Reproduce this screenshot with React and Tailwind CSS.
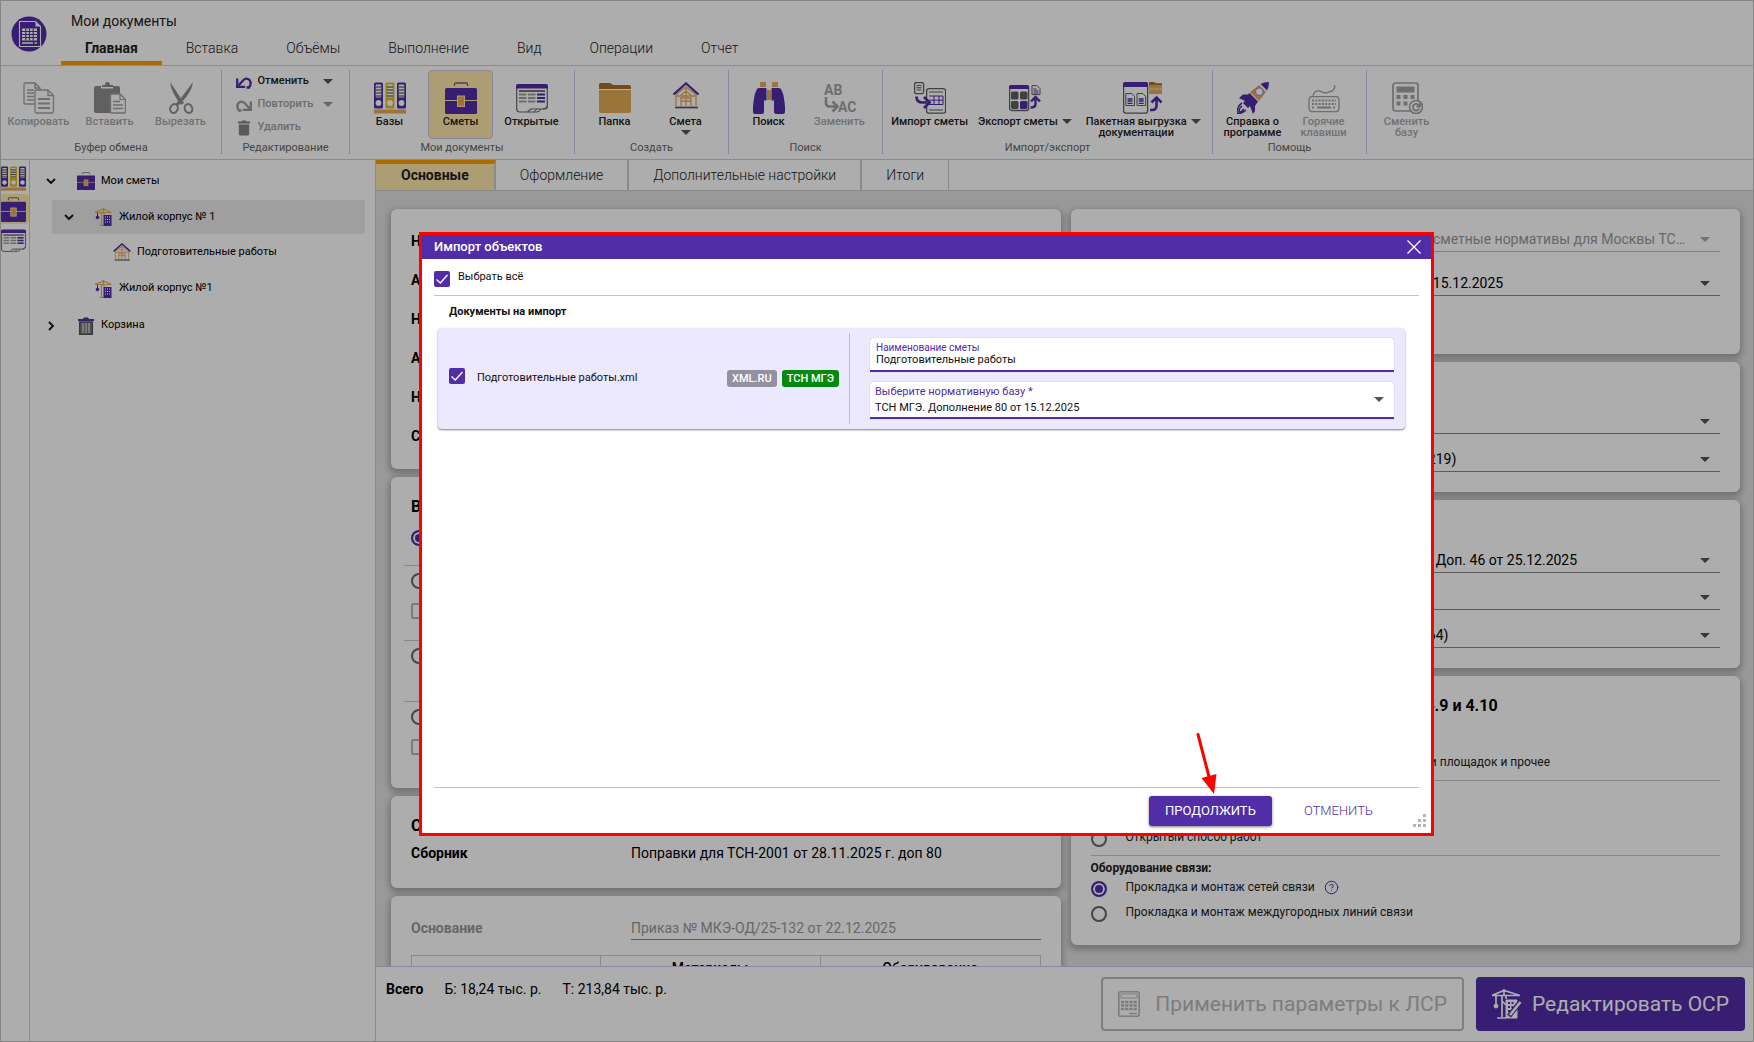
import React from "react";
import { CircleHelp } from "lucide-react";

const P = "#512da8";
const O = "#e5ac58";
const G = "#5f5f5f";
const D = "#a3a3a3";

function Svg({ size = "size-8", box = "0 0 32 32", children }) {
  return (
    <svg viewBox={box} className={`${size} shrink-0`} fill="none" aria-hidden="true">
      {children}
    </svg>
  );
}

function Caret({ className = "text-[#555]" }) {
  return (
    <svg viewBox="0 0 10 5" className={`h-[5px] w-[10px] shrink-0 ${className}`} aria-hidden="true">
      <path d="M0 0h10L5 5z" fill="currentColor" />
    </svg>
  );
}

function Binders({ size }) {
  return (
    <Svg size={size}>
      {[[0, P], [11.5, "#dcbb25"], [23, P]].map(([x, c]) => (
        <g key={x}>
          <rect x={x} y="0.5" width="9" height="26" rx="1.5" fill={c} />
          <rect x={x + 1.7} y="2.5" width="5.6" height="13" rx="1" fill="#fff" />
          <path d={`M${x + 1.5} 5h6M${x + 1.5} 8h6M${x + 1.5} 11h6M${x + 1.5} 14h6`} stroke="#333" strokeWidth="1.2" />
          <circle cx={x + 4.5} cy="21" r="2.9" fill="#fff" />
        </g>
      ))}
      <rect y="27.5" width="32" height="4" fill={O} />
    </Svg>
  );
}

function Briefcase({ size }) {
  return (
    <Svg size={size}>
      <path d="M9.5 4V2.5q0-1.5 1.500-1.500h10q1.500 0 1.500 1.500V4" stroke="#666" strokeWidth="1.300" />
      <rect y="6" width="32" height="26" rx="1.500" fill={P} />
      <path d="M0 18.500h32" stroke="#ffe8aa" strokeWidth="1" />
      <rect x="12.500" y="14" width="7" height="10.500" fill={O} stroke="#ffe8aa" />
    </Svg>
  );
}

function WindowIcon({ size }) {
  return (
    <Svg size={size}>
      <path d="M.7 6v21q0 3 3 3h8l3-3h14q2.600 0 2.600-3V6" stroke="#666" strokeWidth="1.200" />
      <path d="M12 30h9q3 0 3.500-3M18 30l3-3M27 27q3 0 4-3" stroke="#666" />
      <path d="M0 6.500V4q0-2 2-2h28q2 0 2 2v2.500z" fill={P} />
      <path d="M3 9h26" stroke="#444" strokeWidth="1.500" />
      {[12.500, 16, 19.500].map((y) => (
        <g key={y} strokeWidth="2">
          <path d={`M3 ${y}h7.500M12 ${y}h7.500`} stroke="#a0a0a0" />
          <path d={`M21 ${y}h8`} stroke={P} />
        </g>
      ))}
    </Svg>
  );
}

const FolderIcon = () => (
  <Svg>
    <path d="M0 7V2.500Q0 1 1.500 1H10q1.500 0 2.500 1t2.500 1h15q2 0 2 1.500V7z" fill="#a5702a" />
    <path d="M0 8h32v21q0 2-2 2H2q-2 0-2-2z" fill={O} />
  </Svg>
);

function House({ size, box }) {
  return (
    <Svg size={size} box={box}>
      <path d="M6 24V12.500L16 5l10 7.500V24M11 24v-8h10v8M16 6v18M6 14h20M11 19h10M11 13l5-4 5 4" stroke={O} strokeWidth="1.300" />
      <path d="M3.500 12.500L16 1.500l12.500 11" stroke={P} strokeWidth="2.300" />
      <path d="M5 25.500h23" stroke="#555" strokeWidth="1.700" />
    </Svg>
  );
}

const Binoculars = () => (
  <Svg>
    <path d="M7 0h6v5H7zM19 0h6v5h-6z" fill={O} />
    <path d="M14 8h4v10h-4z" fill={O} />
    <path d="M6 6h7.500v12.500H11V30q0 2-2 2H2q-2 0-2-2v-5Q1 13 3 9q1-3 3-3zM26 6h-7.500v12.500H21V30q0 2 2 2h7q2 0 2-2v-5Q31 13 29 9q-1-3-3-3z" fill={P} />
  </Svg>
);

const ReplaceIcon = () => (
  <Svg>
    <text x="0" y="13" fontFamily="Roboto" fontWeight="700" fontSize="14" fill={D}>AB</text>
    <text x="14" y="30" fontFamily="Roboto" fontWeight="700" fontSize="14" fill={D}>AC</text>
    <path d="M2 15v6q0 3.500 3.500 3.500H12M8.500 19.500l5 5-5 5" stroke={D} strokeWidth="2.600" />
  </Svg>
);

const ImportIcon = () => (
  <Svg>
    <rect x=".6" y=".6" width="9" height="11" rx="1.500" stroke={G} strokeWidth="1.300" />
    <path d="M2.500 3.500h5M2.500 8h5" stroke={G} /><path d="M2.500 5.800h5" stroke={P} />
    <rect x="12.600" y="6.600" width="19" height="24.600" rx="2.500" stroke={G} strokeWidth="1.300" />
    <path d="M15 10h14M15 28h14" stroke={G} strokeWidth="1.200" />
    <path d="M15 14h14v8.500H15M15 18.200h14M20 14v8.500M25 14v8.500" stroke={P} />
    <path d="M2.500 14.500q0 6 6 6H12M10 15l5.500 5.500-5.500 5.500" stroke={P} strokeWidth="2.700" />
  </Svg>
);

const ExportIcon = () => (
  <Svg>
    <rect x=".6" y="4" width="19" height="24.500" rx="2" stroke={G} strokeWidth="1.300" />
    <path d="M0 7V5q0-2 2-2h16q2 0 2 2v2z" fill={P} />
    <rect x="2" y="9.500" width="7.500" height="8" rx="1.500" fill={G} /><rect x="11" y="9.500" width="7.500" height="8" rx="1.500" fill={G} />
    <rect x="2" y="19" width="7.500" height="8" rx="1.500" fill={G} /><rect x="11" y="19" width="7.500" height="8" rx="1.500" fill={P} />
    <path d="M23 3.600h5l3 3v6h-8z" stroke={G} />
    <path d="M24.500 7h3M24.500 9h5M24.500 11h5" stroke={P} />
    <path d="M21.500 25.500h1q4 0 4-4V17M22 19.500l4.500-4.500 4.500 4.500" stroke={P} strokeWidth="2.400" />
  </Svg>
);

const PackIcon = () => (
  <Svg size="h-8 w-10" box="0 0 40 32">
    <rect x=".6" y=".6" width="24" height="30.600" rx="2.500" stroke={G} strokeWidth="1.300" />
    <path d="M0 5V2q0-2 2-2h21q2 0 2 2v3z" fill={P} />
    <path d="M2.800 11.500h6l2.700 3v9H2.800zM14 11.500h6l2.700 3v9H14z" stroke={G} />
    <path d="M4.500 17h5M4.500 19h5M4.500 21.300h5M15.700 17h5M15.700 19h5M15.700 21.300h5" stroke={P} strokeWidth="1.300" />
    <path d="M26 0h5l1.500 1H39v11H26z" fill={O} /><path d="M26 0h5l1.500 1.500H39V3H26z" fill="#a5702a" />
    <path d="M27 7h12" stroke="#fff" strokeDasharray="1.500 1" />
    <path d="M27 28h2q4.500 0 4.500-4.500V17M28.500 20.500l5-5 5 5" stroke={P} strokeWidth="2.600" />
  </Svg>
);

const Rocket = () => (
  <Svg>
    <path d="M32 0q0 5-2 8.500L23.500 2Q27 0 32 0z" fill={P} />
    <path d="M22 3l7 7-7 9-9-9z" fill={O} /><circle cx="22.300" cy="9.700" r="3.800" fill="#fff" stroke={P} strokeWidth=".5" />
    <path d="M12.500 11L21 19.500 18 24v5l-2 3-3-8-2 2-5-5 2-2-6-3 4-3.500h5z" fill={P} />
    <path d="M5 21q-5 3-5 11 6-1 9-4M5 24q-3 2-3 6 3 0 5-3" stroke={P} strokeWidth="1.500" />
  </Svg>
);

const KeyboardIcon = () => (
  <Svg>
    <path d="M5 14q1-6 7-5 5 3 9 1 6-1 6-7" stroke={D} strokeWidth="1.300" />
    <rect x="1" y="14.600" width="30" height="15" rx="3" stroke={D} strokeWidth="1.300" />
    <path d="M4 18.500h24M4 22h24M4 25.500h3M25 25.500h3" stroke={D} strokeWidth="2" strokeDasharray="2 1.300" />
    <path d="M9 25.500h14" stroke={D} strokeWidth="2" />
  </Svg>
);

const CalcIcon = () => (
  <Svg>
    <rect x="2" y="1" width="25" height="28" rx="2.500" stroke={D} strokeWidth="1.700" />
    <rect x="5.500" y="4.500" width="18" height="6" fill={D} />
    <path d="M5.500 15h18M5.500 21.500h11" stroke={D} strokeWidth="4" strokeDasharray="4 3" />
    <circle cx="25" cy="25" r="6.500" fill="#fff" stroke={D} strokeWidth="1.600" />
    <path d="M28 23.500a3.300 3.300 0 1 0 .2 3M29 21v3.500h-3.500" stroke={D} strokeWidth="1.800" />
  </Svg>
);

const CopyIcon = () => (
  <Svg>
    <path d="M1 2.500Q1 1 2.500 1H12l5 5v16H2.500Q1 22 1 20.500z" stroke={D} strokeWidth="1.300" />
    <path d="M4 8h7M4 11h7M4 14.500h7M4 18h7M12 1v5h5" stroke={D} strokeWidth="1.500" />
    <path d="M12 9.500Q12 8 13.500 8H25l5.500 5.500v16q0 1.500-1.500 1.500H13.500Q12 31 12 29.500z" fill="#fff" stroke={D} strokeWidth="1.300" />
    <path d="M25 8v5.500h5.500" stroke={D} strokeWidth="1.300" /><path d="M15 17h12M15 21.500h12M15 26h12" stroke={D} strokeWidth="1.900" />
  </Svg>
);

const PasteIcon = () => (
  <Svg>
    <path d="M2 4h5v2.500h12V4h5q2 0 2 2v25H2q-2 0-2-2V6q0-2 2-2z" fill="#8e8e8e" />
    <path d="M8 5V3h3q0-3 2.500-3T16 3h3v2z" fill="#8e8e8e" />
    <path d="M16.500 13.500q0-1.500 1.500-1.500h8l5.500 5.500v12q0 1.500-1.500 1.500H18q-1.500 0-1.500-1.500z" fill="#fff" stroke={D} strokeWidth="1.400" />
    <path d="M26 12v5.500h5.500" stroke={D} strokeWidth="1.200" /><path d="M19 19.500h7M19 23h10M19 26.500h10" stroke={D} strokeWidth="1.700" />
  </Svg>
);

const CutIcon = () => (
  <Svg>
    <path d="M5 0l14 21-3 2Q6 10 5 0zM28 0Q27 9 18 19l-2-3z" fill="#8e8e8e" />
    <path d="M16 17l-4 6" stroke="#8e8e8e" strokeWidth="3" />
    <ellipse cx="9" cy="26.500" rx="3.700" ry="4.500" transform="rotate(25 9 26.500)" stroke="#8e8e8e" strokeWidth="2" />
    <ellipse cx="23.500" cy="26.500" rx="3.700" ry="4.500" transform="rotate(-25 23.500 26.500)" stroke="#8e8e8e" strokeWidth="2" />
  </Svg>
);

const UndoIcon = ({ flip, color }) => (
  <Svg size="size-4" box="0 0 16 16">
    <g transform={flip ? "matrix(-1 0 0 1 16 0)" : undefined} stroke={color} strokeWidth="2.300">
      <path d="M2.500 11.500L7 6.500q3.500-3.500 6.500-.5 2.500 3.500-.5 7.500h-2.500" />
      <path d="M1.200 4.500v8.300h8" />
    </g>
  </Svg>
);

const BinIcon = () => (
  <Svg size="size-4" box="0 0 16 16">
    <path d="M2 1.500h3.500L6.500.5h3l1 1H14v2H2zM2.800 4.500h10.400v9.500q0 1.500-1.500 1.500H4.300q-1.500 0-1.500-1.500z" fill="#858585" />
  </Svg>
);

function Crane() {
  return (
    <Svg size="size-[18px]" box="0 0 18 18">
      <path d="M0 4.500L8.500 1l8 3.500M0 4.500h16.500M8.500 0v4.500M6.500 5v12.500M9 5v2M4.500 17.500h6" stroke={O} strokeWidth="1.200" />
      <path d="M2.500 5v4" stroke={P} /><circle cx="2.500" cy="9.500" r="1.800" fill={P} />
      <path d="M8.500 7h8v11h-8z" fill={P} />
      <path d="M10 9h5.500M10 11.500h5.500M10 14h5.500" stroke="#fff" strokeDasharray="1 1" />
    </Svg>
  );
}

const Trash = () => (
  <Svg size="size-[18px]" box="0 0 18 18">
    <path d="M1 2h5l1-1.500h4L12 2h5v2H1z" fill={P} />
    <path d="M2.600 5h12.800v12.300H2.600z" stroke="#555" strokeWidth="1.300" fill="#777" />
    <path d="M6 6v10M9 6v10M12 6v10" stroke="#e5e5e5" strokeWidth="1.200" />
  </Svg>
);

const Logo = () => (
  <svg viewBox="0 0 36 36" className="mt-4 ml-[11px] size-9 shrink-0" fill="none" aria-hidden="true">
    <circle cx="18" cy="18" r="17.500" fill={P} />
    <path d="M8.500 5.500h16l5 5v20h-21z" stroke="#fff" strokeWidth="1.100" />
    <path d="M24.500 5.500v5h5z" fill="#fff" />
    <path d="M11 12.500h15v12H11z" fill="#fff" /><path d="M11 15.500h15M11 18.500h15M11 21.500h15M14.800 12.500v12M18.500 12.500v12M22.200 12.500v12" stroke={P} strokeWidth="1.100" />
    <path d="M11 27h11M23.500 27H26" stroke="#fff" strokeWidth="1.600" />
  </svg>
);

function Tool({ icon, label, label2, off, active, caret, wide, below }) {
  return (
    <button
      type="button"
      className={`flex h-[69px] flex-col items-center rounded border pt-[11px] text-[11px] leading-[11px] font-medium whitespace-nowrap ${wide ? "px-1" : "mx-[3px] w-[65px]"} ${active ? "border-[#d1c4e9] bg-[#ffe8aa]" : "border-transparent"} ${off ? "text-[#a8a8a8]" : "text-[#222]"}`}
    >
      {icon}
      <span className="mt-[2px] flex items-center gap-1">
        <span>{label}</span>
        {caret && <Caret />}
      </span>
      {label2 && <span className={caret ? "pr-3.5" : ""}>{label2}</span>}
      {below && <span className="mt-[3px]"><Caret /></span>}
    </button>
  );
}

function Group({ title, children, width }) {
  return (
    <section className={`flex h-[84px] shrink-0 flex-col items-center border-r border-[#d1c4e9] ${width}`}>
      <div className="flex w-full flex-1 justify-center pr-[3px]">{children}</div>
      <h2 className="text-[11px] leading-[13px] text-[#666]">{title}</h2>
    </section>
  );
}

function SmallTool({ icon, label, off, caret }) {
  return (
    <button type="button" className={`flex h-[23px] items-center text-left text-[11px] font-medium ${off ? "text-[#a0a0a0]" : "text-[#222]"}`}>
      {icon}
      <span className="ml-[6px] w-[65px]">{label}</span>
      {caret && <Caret className={off ? "text-[#999]" : "text-[#555]"} />}
    </button>
  );
}

function Chevron({ right }) {
  return (
    <svg viewBox="0 0 10 10" className="size-[10px] shrink-0" fill="none" aria-hidden="true">
      <path d={right ? "M3 1l4 4-4 4" : "M1 3l4 4 4-4"} stroke="#111" strokeWidth="1.800" />
    </svg>
  );
}

function TreeItem({ chevron, icon, label, className = "" }) {
  return (
    <li className={`flex items-center text-[11px] text-black ${className}`}>
      <span className="mr-[21px] w-[10px]">{chevron}</span>
      {icon}
      <span className="ml-[6px]">{label}</span>
    </li>
  );
}

function Card({ className = "", children }) {
  return <section className={`shrink-0 rounded-md bg-white px-5 shadow-[0_3px_6px_2px_rgba(0,0,0,0.25)] ${className}`}>{children}</section>;
}

const Title = ({ children }) => <h3 className="h-5 text-base leading-5 font-bold whitespace-nowrap text-black">{children}</h3>;
const Rule = ({ className = "" }) => <hr className={`border-t border-[#cacaca] ${className}`} />;

function Picker({ label, value, off, className = "" }) {
  return (
    <label className={`flex text-sm ${off ? "text-[#999]" : "text-black"} ${className}`}>
      <span className="h-[25px] w-[220px] shrink-0 truncate leading-[25px] font-bold">{label}</span>
      <span className={`flex h-[25px] min-w-0 flex-1 items-center border-b ${off ? "border-[#bbb]" : "border-[#888]"}`}>
        <select disabled={off} className="mr-[10px] h-6 min-w-0 flex-1 appearance-none truncate bg-transparent opacity-100 outline-none">
          <option>{value}</option>
        </select>
        <span className="mr-[10px] flex"><Caret className={off ? "text-[#aaa]" : "text-[#555]"} /></span>
      </span>
    </label>
  );
}

function Radio({ name, label, checked, help, className = "h-[25px]" }) {
  return (
    <div className={`flex items-center ${className}`}>
      <label className="flex items-center text-xs text-[#222]">
        <input
          type="radio"
          name={name}
          defaultChecked={checked}
          className="size-4 appearance-none rounded-full border-2 border-[#666] checked:border-[#512da8] checked:bg-[#512da8] checked:shadow-[inset_0_0_0_2px_white]"
        />
        <span className="ml-[19px] pb-1">{label}</span>
      </label>
      {help && <CircleHelp className="mb-[3px] ml-[9px] size-[15px] text-[#512da8]" strokeWidth={1.6} />}
    </div>
  );
}

const Tick = ({ label }) => (
  <label className="flex h-[30px] items-center text-xs text-[#999]">
    <input type="checkbox" disabled className="mr-[19px] size-4 appearance-none rounded-[2px] border-2 border-[#b5b5b5]" />
    {label}
  </label>
);

function Check({ id, label }) {
  return (
    <span className="relative flex size-4 shrink-0">
      <input id={id} aria-label={label} type="checkbox" defaultChecked className="size-4 appearance-none rounded-[2px] bg-[#512da8]" />
      <svg viewBox="0 0 16 16" className="pointer-events-none absolute inset-0 size-4" fill="none" aria-hidden="true">
        <path d="M2.500 8.500L6.300 12 13.500 4" stroke="#fff" strokeWidth="1.300" />
      </svg>
    </span>
  );
}

const menu = ["Вставка", "Объёмы", "Выполнение", "Вид", "Операции", "Отчет"];
const info = ["Наименование", "Адрес", "Назначение", "Автор", "Номер", "Стадия"];

function Header() {
  return (
    <header className="flex h-[66px] shrink-0 border-b border-[#d1c4e9]">
      <Logo />
      <div className="ml-[14px] flex flex-col justify-between">
        <h1 className="mt-[11px] ml-[10px] text-sm leading-5 text-[#222]">Мои документы</h1>
        <nav className="flex text-sm font-light text-[#222]">
          <a href="#main" className="h-[30px] border-b-4 border-[#ffa000] px-6 leading-[27px] font-bold">Главная</a>
          {menu.map((m) => (
            <a key={m} href="#menu" className="h-[30px] px-6 leading-[27px]">{m}</a>
          ))}
        </nav>
      </div>
    </header>
  );
}

function Ribbon() {
  return (
    <div className="flex h-[94px] shrink-0 overflow-hidden border-b border-[#d1c4e9] pt-1 pl-px">
      <Group title="Буфер обмена" width="w-[221px]">
        <Tool off icon={<CopyIcon />} label="Копировать" />
        <Tool off icon={<PasteIcon />} label="Вставить" />
        <Tool off icon={<CutIcon />} label="Вырезать" />
      </Group>
      <Group title="Редактирование" width="w-[128px]">
        <div className="flex flex-col">
          <SmallTool icon={<UndoIcon color={P} />} label="Отменить" caret />
          <SmallTool off icon={<UndoIcon flip color="#999" />} label="Повторить" caret />
          <SmallTool off icon={<BinIcon />} label="Удалить" />
        </div>
      </Group>
      <Group title="Мои документы" width="w-[225px]">
        <Tool icon={<Binders />} label="Базы" />
        <Tool active icon={<Briefcase />} label="Сметы" />
        <Tool icon={<WindowIcon />} label="Открытые" />
      </Group>
      <Group title="Создать" width="w-[154px]">
        <Tool icon={<FolderIcon />} label="Папка" />
        <Tool icon={<House />} label="Смета" below />
      </Group>
      <Group title="Поиск" width="w-[154px]">
        <Tool icon={<Binoculars />} label="Поиск" />
        <Tool off icon={<ReplaceIcon />} label="Заменить" />
      </Group>
      <Group title="Импорт/экспорт" width="w-[330px]">
        <Tool wide icon={<ImportIcon />} label="Импорт сметы" />
        <Tool wide icon={<ExportIcon />} label="Экспорт сметы" caret />
        <div className="w-1" />
        <Tool wide icon={<PackIcon />} label="Пакетная выгрузка" label2="документации" caret />
      </Group>
      <Group title="Помощь" width="w-[154px]">
        <Tool icon={<Rocket />} label="Справка о" label2="программе" />
        <Tool off icon={<KeyboardIcon />} label="Горячие" label2="клавиши" />
      </Group>
      <div className="pl-[4px]">
        <Tool off icon={<CalcIcon />} label="Сменить" label2="базу" />
      </div>
    </div>
  );
}

function Sidebar() {
  return (
    <>
      <nav className="flex w-[30px] shrink-0 flex-col border-r border-[#d1c4e9] pt-[5px] pl-px" aria-label="Разделы">
        <button type="button" className="h-[26px]" aria-label="Базы"><Binders size="size-[25px]" /></button>
        <button type="button" className="mt-[3px] h-[30px] rounded-r bg-[#ffe8aa]" aria-label="Сметы"><Briefcase size="size-[25px]" /></button>
        <button type="button" className="mt-[3px] h-[26px]" aria-label="Открытые"><WindowIcon size="size-[25px]" /></button>
      </nav>
      <aside className="w-[346px] shrink-0 border-r border-[#ccc] pr-[10px]">
        <ul>
          <TreeItem className="h-10 pt-0.5 pl-4" chevron={<Chevron />} icon={<Briefcase size="size-[18px]" />} label="Мои сметы" />
          <TreeItem className="ml-[22px] h-[34px] rounded-[2px] bg-[#ebebeb] pl-3" chevron={<Chevron />} icon={<Crane />} label="Жилой корпус № 1" />
          <TreeItem className="h-[36px] pl-[52px]" icon={<House size="size-[18px]" box="2.500 0 27 27" />} label="Подготовительные работы" />
          <TreeItem className="h-[37px] pl-[34px]" icon={<Crane />} label="Жилой корпус №1" />
          <TreeItem className="h-[37px] pl-4" chevron={<Chevron right />} icon={<Trash />} label="Корзина" />
        </ul>
      </aside>
    </>
  );
}

function Content() {
  return (
    <div className="grid min-h-0 flex-1 grid-cols-2 items-start gap-x-[10px] overflow-hidden bg-[#e2e2e2] pt-[18px] pr-[14px] pl-[15px]">
      <div className="flex min-w-0 flex-col gap-2">
        <Card className="pt-3 pb-[14px]">
          {info.map((t) => (
            <p key={t} className="flex h-[39px] items-center text-sm font-bold text-black">{t}</p>
          ))}
        </Card>
        <Card className="pt-5 pb-[26px]">
          <Title>Вид работ</Title>
          <Radio name="kind" checked label="Строительство" className="mt-2 h-[26px]" />
          <Rule className="-mx-[7px] mt-[14px]" />
          <Radio name="kind" label="Реконструкция" className="h-[30px]" />
          <Tick label="Стеснённые условия" />
          <Rule className="-mx-[7px] mt-[14px]" />
          <Radio name="kind" label="Капитальный ремонт" className="h-[30px]" />
          <Rule className="-mx-[7px] mt-[30px]" />
          <Radio name="kind" label="Реставрация" className="h-[30px]" />
          <Tick label="Без отселения" />
        </Card>
        <Card className="pt-5 pb-[18px]">
          <Title>Сборник поправок</Title>
          <p className="flex h-[34px] items-center text-sm text-black">
            <b className="w-[220px] font-bold">Сборник</b>
            <span>Поправки для ТСН-2001 от 28.11.2025 г. доп 80</span>
          </p>
        </Card>
        <Card className="pt-5 pb-5">
          <label className="flex h-6 items-center text-sm text-[#999]">
            <span className="w-[220px] shrink-0 font-bold">Основание</span>
            <input readOnly defaultValue="Приказ № МКЭ-ОД/25-132 от 22.12.2025" className="h-6 min-w-0 flex-1 border-b border-[#888] bg-transparent outline-none" />
          </label>
          <table className="mt-[15px] w-full table-fixed border-collapse text-sm text-black">
            <thead>
              <tr className="h-[25px]">
                <th className="w-[30%] border border-[#d1c4e9]" />
                <th className="w-[35%] border border-[#d1c4e9] font-medium">Материалы</th>
                <th className="w-[35%] border border-[#d1c4e9] font-medium">Оборудование</th>
              </tr>
            </thead>
          </table>
        </Card>
      </div>
      <div className="flex min-w-0 flex-col gap-2">
        <Card className="pt-[18px] pb-[58px]">
          <Picker off label="Нормативная база" value="Территориальные сметные нормативы для Москвы ТСН-2001" />
          <Picker label="Дополнение" value="Дополнение 80 от 15.12.2025" className="mt-[19px]" />
        </Card>
        <Card className="pt-5 pb-5">
          <Title>Индексы пересчёта</Title>
          <Picker label="Вид индекса" value="" className="mt-[7px]" />
          <Picker label="Индекс" value="Декабрь 2025 (№ 219)" className="mt-[13px]" />
        </Card>
        <Card className="pt-5 pb-5">
          <Title>Коэффициенты</Title>
          <Picker label="Сборник" value="Коэффициент ТСН Доп. 46 от 25.12.2025" className="mt-2" />
          <Picker label="Период" value="" className="mt-3" />
          <Picker label="Индекс" value="Декабрь 2025 (№ 64)" className="mt-[13px]" />
        </Card>
        <Card className="pt-5 pb-[19px]">
          <Title>Условия применения по сборникам 4.7, 4.8, 4.9 и 4.10</Title>
          <Radio name="area" label="Строительство объектов метрополитена" className="mt-[10px] h-[25px]" />
          <Radio name="area" label="Благоустройство территории, устройство дорог, улиц и площадок и прочее" />
          <Rule className="mt-1" />
          <h4 className="h-5 text-xs leading-6 font-bold text-[#222]">Способ работ:</h4>
          <Radio name="way" checked label="Закрытый способ работ" />
          <Radio name="way" label="Открытый способ работ" />
          <Rule className="mt-1" />
          <h4 className="h-5 text-xs leading-6 font-bold text-[#222]">Оборудование связи:</h4>
          <Radio name="net" checked label="Прокладка и монтаж сетей связи" help />
          <Radio name="net" label="Прокладка и монтаж междугородных линий связи" />
        </Card>
      </div>
    </div>
  );
}

function Footer() {
  return (
    <footer className="flex h-[76px] shrink-0 items-start border-t border-[#d1c4e9] pr-[9px] pl-[10px] text-sm text-black">
      <p className="mt-3 flex gap-[21px] leading-5">
        <b className="font-bold">Всего</b>
        <span>Б: 18,24 тыс. р.</span>
        <span>Т: 213,84 тыс. р.</span>
      </p>
      <div className="mt-[10px] ml-auto flex gap-3 text-[21px]">
        <button type="button" disabled className="flex h-[54px] items-center rounded border-2 border-[#bbb] px-[15px] text-[#b8b8b8]">
          <svg viewBox="0 0 22 26" className="mr-[15px] h-[26px] w-[22px]" fill="none" aria-hidden="true">
            <rect x=".8" y=".8" width="20.400" height="24.400" rx="2" stroke="#b8b8b8" strokeWidth="1.600" />
            <rect x="3" y="3" width="16" height="4" stroke="#b8b8b8" />
            <path d="M3 11h16M3 14.500h16M3 18h16" stroke="#b8b8b8" strokeWidth="2.500" strokeDasharray="3.200 1" /><path d="M11 22.500h8" stroke="#b8b8b8" strokeWidth="1.500" />
          </svg>
          Применить параметры к ЛСР
        </button>
        <button type="button" className="flex h-[54px] items-center rounded bg-[#512da8] px-4 text-white">
          <svg viewBox="0 0 30 30" className="mr-[10px] size-[30px]" fill="none" stroke="#fff" aria-hidden="true">
            <path d="M0 6.500L12 1.500l16 5M0 6.500h28M12 0v7M10 7v21M14 7v3M4 7v9M10 12l4 4M5 29h9" strokeWidth="1.700" />
            <circle cx="4" cy="17" r="2" fill="#fff" />
            <path d="M14 11h11v18H14z" fill="#fff" /><path d="M16 14h7M16 18h5M16 22h3" stroke={P} strokeDasharray="2 1.500" strokeWidth="1.800" />
            <path d="M29 12L17 27" stroke={P} strokeWidth="5" /><path d="M28.500 13L18 26" strokeWidth="2.600" />
          </svg>
          Редактировать ОСР
        </button>
      </div>
    </footer>
  );
}

function ImportDialog() {
  return (
    <div role="dialog" aria-labelledby="dlg" className="absolute top-[232px] left-[419px] flex h-[604px] w-[1015px] flex-col border-[3px] border-[#f00] bg-white text-[11px] text-[#111]">
      <div className="flex h-6 shrink-0 items-center justify-between bg-[#512da8] pr-[10px] pl-3 text-white">
        <h2 id="dlg" className="text-[13px] font-medium">Импорт объектов</h2>
        <button type="button" aria-label="Закрыть">
          <svg viewBox="0 0 14 14" className="size-[14px]" stroke="#fff" strokeWidth="1.300" aria-hidden="true"><path d="M.5.5l13 13M13.500.5l-13 13" /></svg>
        </button>
      </div>
      <div className="mx-3 flex h-[37px] shrink-0 items-center border-b border-[#c2c2c2] pt-[3px]">
        <Check id="all" label="Выбрать всё" />
        <label htmlFor="all" className="ml-2 pb-0.5">Выбрать всё</label>
      </div>
      <h3 className="mt-[9px] ml-[27px] h-[14px] leading-[14px] font-bold">Документы на импорт</h3>
      <div className="mt-[9px] mr-[26px] ml-4 flex h-[101px] shrink-0 rounded-sm bg-[#ece8fe] py-[5px] shadow-[0_1px_2px_rgba(0,0,0,0.5)]">
        <div className="flex w-[412px] items-center border-r border-[#c0bfc8] pr-[10px] pl-[11px]">
          <span className="pb-[5px]"><Check id="doc" label="Подготовительные работы.xml" /></span>
          <label htmlFor="doc" className="ml-3 flex-1">Подготовительные работы.xml</label>
          <span className="h-[17px] rounded-[3px] bg-[#9390a0] px-[5px] leading-[17px] font-medium text-white">XML.RU</span>
          <span className="ml-[5px] h-[17px] rounded-[3px] bg-[#058a0f] px-[5px] leading-[17px] font-medium text-white">ТСН МГЭ</span>
        </div>
        <div className="mr-[11px] ml-5 flex flex-1 flex-col gap-[10px] pt-[5px]">
          <label className="flex h-[34px] flex-col rounded-t-[3px] border-b-2 border-[#512da8] bg-white pt-[5px] pl-[6px] shadow-[0_0_1px_rgba(0,0,0,0.4)]">
            <span className="text-[10px] leading-[10px] text-[#512da8]">Наименование сметы</span>
            <input defaultValue="Подготовительные работы" className="h-[13px] w-full bg-transparent leading-[13px] outline-none" />
          </label>
          <label className="flex h-[37px] items-center rounded-t-[3px] border-b-2 border-[#512da8] bg-white pr-[10px] pl-[5px] shadow-[0_0_1px_rgba(0,0,0,0.4)]">
            <span className="flex flex-1 flex-col">
              <span className="leading-4 text-[#512da8]">Выберите нормативную базу *</span>
              <select className="h-4 w-full appearance-none bg-transparent leading-4 outline-none"><option>ТСН МГЭ. Дополнение 80 от 15.12.2025</option></select>
            </span>
            <Caret />
          </label>
        </div>
      </div>
      <div className="mx-3 mt-auto flex h-[46px] shrink-0 items-start justify-end border-t border-[#c2c2c2] pt-2 text-[13px]">
        <button type="button" className="h-[30px] rounded-[3px] bg-[#512da8] px-4 text-white shadow-[0_1px_3px_rgba(0,0,0,0.5)]">ПРОДОЛЖИТЬ</button>
        <button type="button" className="mr-[30px] ml-4 h-[30px] px-4 font-light text-[#512da8]">ОТМЕНИТЬ</button>
      </div>
      <svg viewBox="0 0 14 14" className="absolute right-[5px] bottom-[5px] size-[14px]" fill="#b5b5b5" aria-hidden="true">
        <path d="M11 0h3v3h-3zM11 5h3v3h-3zM6 5h3v3H6zM11 10h3v3h-3zM6 10h3v3H6zM1 10h3v3H1z" />
      </svg>
      <svg viewBox="0 0 24 62" className="absolute right-[212px] bottom-[38px] h-[62px] w-6" fill="none" aria-hidden="true">
        <path d="M3 1.500l12 46" stroke="#f00" strokeWidth="3" strokeLinecap="round" /><path d="M6.500 45L21.500 41 19 61z" fill="#f00" />
      </svg>
    </div>
  );
}

export default function App() {
  return (
    <div className="relative flex h-screen flex-col overflow-hidden bg-white font-['Roboto','Liberation_Sans',sans-serif]">
      <Header />
      <Ribbon />
      <div className="flex min-h-0 flex-1">
        <Sidebar />
        <main className="flex min-w-0 flex-1 flex-col">
          <nav className="flex h-[31px] shrink-0 border-b border-[#ccc] text-sm leading-[30px] font-light text-[#222]">
            <a href="#t1" className="border-t-4 border-r-2 border-t-[#ffa000] border-r-[#ccc] bg-[#ffe8aa] px-[25px] leading-[22px] font-bold">Основные</a>
            <a href="#t2" className="border-r-2 border-[#ccc] px-6">Оформление</a>
            <a href="#t3" className="border-r-2 border-[#ccc] px-6">Дополнительные настройки</a>
            <a href="#t4" className="border-r border-[#ccc] px-6">Итоги</a>
          </nav>
          <Content />
          <Footer />
        </main>
      </div>
      <div className="absolute inset-0 border border-[#858585] bg-black/32" />
      <ImportDialog />
    </div>
  );
}
